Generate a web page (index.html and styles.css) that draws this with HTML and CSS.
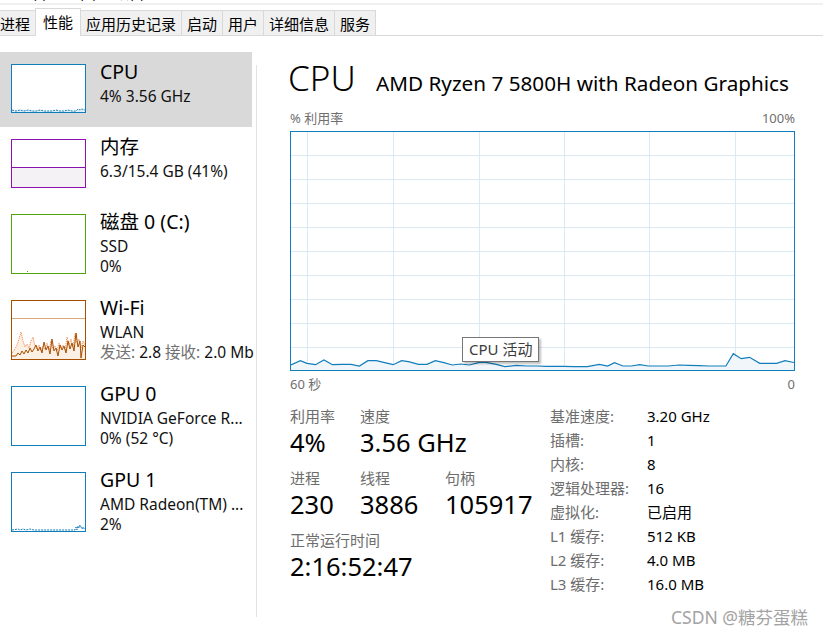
FILE: index.html
```html
<!DOCTYPE html>
<html lang="zh-CN">
<head>
<meta charset="utf-8">
<title>任务管理器 - 性能</title>
<link rel="stylesheet" href="styles.css">
</head>
<body>
<div class="menu-strip"><span class="menu-text">文件(F)&nbsp;&nbsp;&nbsp;选项(O)&nbsp;&nbsp;&nbsp;查看(V)</span></div>
<div class="band"></div>
<nav class="tabs">
  <div class="tab">进程</div>
  <div class="tab active">性能</div>
  <div class="tab">应用历史记录</div>
  <div class="tab">启动</div>
  <div class="tab">用户</div>
  <div class="tab">详细信息</div>
  <div class="tab">服务</div>
</nav>
<div class="main">
  <aside class="side">
    <div class="item sel">
      <div class="thumb c-blue">
        <svg viewBox="0 0 73 47" preserveAspectRatio="none">
          <polygon fill="#e3eef7" points="0,47 0,45 4,46 8,45 12,46 16,45 20,46 24,46 28,45 32,46 36,46 40,46 44,45 48,46 52,46 56,45 60,46 64,46 66,44 68,45 70,44 73,45 73,47"/>
          <polyline fill="none" stroke="#117dbb" stroke-width="1" stroke-dasharray="2 1" points="0,45 4,46 8,45 12,46 16,45 20,46 24,46 28,45 32,46 36,46 40,46 44,45 48,46 52,46 56,45 60,46 64,46 66,44 68,45 70,44 73,45"/>
        </svg>
      </div>
      <div class="info">
        <div class="name">CPU</div>
        <div class="sub">4% 3.56 GHz</div>
      </div>
    </div>
    <div class="item">
      <div class="thumb c-purple">
        <svg viewBox="0 0 73 47" preserveAspectRatio="none">
          <rect x="0" y="27.5" width="73" height="20" fill="#f4f2f4"/>
          <line x1="0" y1="27.5" x2="73" y2="27.5" stroke="#8b12ae" stroke-width="1"/>
        </svg>
      </div>
      <div class="info">
        <div class="name">内存</div>
        <div class="sub">6.3/15.4 GB (41%)</div>
      </div>
    </div>
    <div class="item tall">
      <div class="thumb c-green">
        <svg viewBox="0 0 73 58" preserveAspectRatio="none">
          <rect x="15" y="56" width="1" height="1" fill="#4da60c"/>
        </svg>
      </div>
      <div class="info">
        <div class="name">磁盘 0 (C:)</div>
        <div class="sub">SSD</div>
        <div class="sub">0%</div>
      </div>
    </div>
    <div class="item tall">
      <div class="thumb c-orange">
        <svg viewBox="0 0 73 58" preserveAspectRatio="none">
          <line x1="0" y1="17.5" x2="73" y2="17.5" stroke="#dba879" stroke-width="1"/>
          <polygon fill="#fcefe3" points="0,58 0,52 3,48 5,44 7,38 9,31 11,40 13,46 15,43 17,47 19,40 21,36 23,45 25,48 27,44 29,50 31,45 33,48 35,42 37,49 39,40 41,48 43,45 45,50 47,42 49,47 51,44 53,49 55,36 57,44 59,38 61,46 63,33 65,42 67,38 69,47 71,40 73,44 73,58"/>
          <polyline fill="none" stroke="#f0854a" stroke-width="1" stroke-dasharray="1 1" points="0,52 3,48 5,44 7,38 9,31 11,40 13,46 15,43 17,47 19,40 21,36 23,45 25,48 27,44 29,50 31,45 33,48 35,42 37,49 39,40 41,48 43,45 45,50 47,42 49,47 51,44 53,49 55,36 57,44 59,38 61,46 63,33 65,42 67,38 69,47 71,40 73,44"/>
          <polyline fill="none" stroke="#a74f01" stroke-width="1" points="0,55 4,55 6,52 8,54 10,50 12,53 14,49 16,52 18,47 20,51 22,48 24,44 26,50 28,46 30,52 32,41 34,49 36,45 38,53 40,38 42,50 44,47 46,55 48,44 50,49 52,45 54,52 56,40 58,48 60,42 62,50 64,32 66,46 68,40 69,57 71,44 73,46"/>
        </svg>
      </div>
      <div class="info">
        <div class="name">Wi-Fi</div>
        <div class="sub">WLAN</div>
        <div class="sub"><span class="dim">发送:</span> 2.8 <span class="dim">接收:</span> 2.0 Mb</div>
      </div>
    </div>
    <div class="item tall">
      <div class="thumb c-blue"></div>
      <div class="info">
        <div class="name">GPU 0</div>
        <div class="sub">NVIDIA GeForce R...</div>
        <div class="sub">0% (52 °C)</div>
      </div>
    </div>
    <div class="item tall">
      <div class="thumb c-blue">
        <svg viewBox="0 0 73 58" preserveAspectRatio="none">
          <polyline fill="none" stroke="#117dbb" stroke-width="1" stroke-dasharray="2 1" points="0,57 6,56 8,57 11,56 14,57 18,56 22,57 30,57 40,57 50,57 60,57 63,57 64,54 65,57 66,53 67,55 68,52 70,56 71,54 73,57"/>
        </svg>
      </div>
      <div class="info">
        <div class="name">GPU 1</div>
        <div class="sub">AMD Radeon(TM) ...</div>
        <div class="sub">2%</div>
      </div>
    </div>
  </aside>
  <div class="sep"></div>
  <section class="detail">
    <div class="head">
      <h1 class="title">CPU</h1>
      <div class="model">AMD Ryzen 7 5800H with Radeon Graphics</div>
    </div>
    <div class="scale"><span>% 利用率</span><span>100%</span></div>
    <div class="graph">
      <svg class="plot" viewBox="0 0 503 238" width="503" height="238">
        <g stroke="#d9eaf4" stroke-width="1">
          <line x1="0" y1="23.5" x2="503" y2="23.5"/>
          <line x1="0" y1="47.5" x2="503" y2="47.5"/>
          <line x1="0" y1="71.5" x2="503" y2="71.5"/>
          <line x1="0" y1="95.5" x2="503" y2="95.5"/>
          <line x1="0" y1="119.5" x2="503" y2="119.5"/>
          <line x1="0" y1="143.5" x2="503" y2="143.5"/>
          <line x1="0" y1="167.5" x2="503" y2="167.5"/>
          <line x1="0" y1="191.5" x2="503" y2="191.5"/>
          <line x1="0" y1="215.5" x2="503" y2="215.5"/>
          <line x1="16.5" y1="0" x2="16.5" y2="238"/>
          <line x1="102.5" y1="0" x2="102.5" y2="238"/>
          <line x1="188.5" y1="0" x2="188.5" y2="238"/>
          <line x1="273.5" y1="0" x2="273.5" y2="238"/>
          <line x1="358.5" y1="0" x2="358.5" y2="238"/>
          <line x1="444.5" y1="0" x2="444.5" y2="238"/>
        </g>
        <polygon fill="#f1f6fa" points="0,238 0,233 9.3,228.7 16,231.3 24.5,232.7 32.9,228 41.4,232.7 51.5,232.3 60,232.3 68.4,234 76.9,228.7 85.3,228.7 93.7,230.7 102.2,232.7 110.6,228.7 117.4,229.7 127.5,232.3 136,232.3 144.4,228.7 152.9,230.7 161.3,233 169.7,232 178.2,233 188.4,230.3 195,230.3 205.2,232.3 213.7,234.7 225.5,233.3 235.6,234 245.7,234 255.9,234.3 272.8,234.3 282.9,234.7 296.4,234.7 308.3,232.3 316.7,234 323.5,230.7 331.9,234 340.4,234 348.8,232.7 357.2,234 367.4,234 377.5,234 387.6,233 397.8,233.3 407.9,233.7 418,234 434.9,234 442.3,221.7 450.2,226.7 458.6,225.3 468.7,231.3 477.2,231.3 485.6,231.3 494,228.7 503,230.5 503,238"/>
        <polyline fill="none" stroke="#117dbb" stroke-width="1.2" points="0,233 9.3,228.7 16,231.3 24.5,232.7 32.9,228 41.4,232.7 51.5,232.3 60,232.3 68.4,234 76.9,228.7 85.3,228.7 93.7,230.7 102.2,232.7 110.6,228.7 117.4,229.7 127.5,232.3 136,232.3 144.4,228.7 152.9,230.7 161.3,233 169.7,232 178.2,233 188.4,230.3 195,230.3 205.2,232.3 213.7,234.7 225.5,233.3 235.6,234 245.7,234 255.9,234.3 272.8,234.3 282.9,234.7 296.4,234.7 308.3,232.3 316.7,234 323.5,230.7 331.9,234 340.4,234 348.8,232.7 357.2,234 367.4,234 377.5,234 387.6,233 397.8,233.3 407.9,233.7 418,234 434.9,234 442.3,221.7 450.2,226.7 458.6,225.3 468.7,231.3 477.2,231.3 485.6,231.3 494,228.7 503,230.5"/>
      </svg>
      <div class="tooltip">CPU 活动</div>
    </div>
    <div class="scale axis"><span>60 秒</span><span>0</span></div>
    <div class="stats">
      <div class="left-stats">
        <div class="row">
          <div><div class="lbl">利用率</div><div class="val">4%</div></div>
          <div><div class="lbl">速度</div><div class="val">3.56 GHz</div></div>
        </div>
        <div class="row">
          <div><div class="lbl">进程</div><div class="val">230</div></div>
          <div><div class="lbl">线程</div><div class="val">3886</div></div>
          <div><div class="lbl">句柄</div><div class="val">105917</div></div>
        </div>
        <div class="row">
          <div class="wide"><div class="lbl">正常运行时间</div><div class="val">2:16:52:47</div></div>
        </div>
      </div>
      <dl class="specs">
        <dt>基准速度:</dt><dd>3.20 GHz</dd>
        <dt>插槽:</dt><dd>1</dd>
        <dt>内核:</dt><dd>8</dd>
        <dt>逻辑处理器:</dt><dd>16</dd>
        <dt>虚拟化:</dt><dd>已启用</dd>
        <dt>L1 缓存:</dt><dd>512 KB</dd>
        <dt>L2 缓存:</dt><dd>4.0 MB</dd>
        <dt>L3 缓存:</dt><dd>16.0 MB</dd>
      </dl>
    </div>
  </section>
</div>
<div class="watermark">CSDN @糖芬蛋糕</div>
</body>
</html>
```

FILE: styles.css
```css
html, body {
  margin: 0;
  padding: 0;
}
body {
  width: 823px;
  height: 635px;
  overflow: hidden;
  position: relative;
  background: #fff;
  color: #000;
  font-family: "Noto Sans", "Noto Sans CJK SC", sans-serif;
}

.menu-strip {
  height: 3px;
  overflow: hidden;
  display: flex;
  align-items: flex-end;
  padding-left: 9px;
}
.menu-text {
  font-size: 12px;
  line-height: 16px;
  white-space: nowrap;
  color: #000;
}
.band {
  height: 2px;
  background: #f0f0f0;
}

.tabs {
  display: flex;
  align-items: flex-end;
  height: 30px;
  border-bottom: 1px solid #d9d9d9;
  margin-left: -6px;
}
.tab {
  border: 1px solid #d9d9d9;
  border-bottom: none;
  background: #f0f0f0;
  padding: 4px 5px 2px;
  line-height: 18px;
  font-size: 15px;
  margin-left: -1px;
  white-space: nowrap;
}
.tab:first-child {
  margin-left: 0;
}
.tab.active {
  background: #fff;
  padding: 4px 7px 5px;
  margin-bottom: -1px;
  position: relative;
  z-index: 1;
}

.main {
  display: flex;
  height: 599px;
}

.side {
  width: 256px;
  flex: none;
  overflow: hidden;
  padding-top: 16px;
  white-space: nowrap;
}
.item {
  display: flex;
  align-items: flex-start;
  width: 252px;
  height: 75px;
  box-sizing: border-box;
  padding: 12px 0 0 11px;
}
.item.tall {
  height: 86px;
}
.item.sel {
  background: #d9d9d9;
}
.thumb {
  width: 75px;
  height: 49px;
  box-sizing: border-box;
  border: 1px solid #117dbb;
  background: #fff;
  flex: none;
}
.tall .thumb {
  height: 60px;
}
.thumb svg {
  display: block;
  width: 73px;
  height: 100%;
}
.c-blue { border-color: #117dbb; }
.c-purple { border-color: #8b12ae; }
.c-green { border-color: #4da60c; }
.c-orange { border-color: #a74f01; }

.info {
  margin-left: 14px;
}
.name {
  font-size: 19.5px;
  line-height: 16px;
  margin-bottom: 6px;
}
.sub {
  font-size: 15.5px;
  line-height: 20px;
  color: #111;
}
.dim {
  color: #707070;
}

.sep {
  width: 1px;
  flex: none;
  background: #e3e3e3;
  margin-top: 29px;
  height: 552px;
}

.detail {
  margin-left: 33px;
  width: 505px;
  padding-top: 18px;
  flex: none;
}
.head {
  display: flex;
  align-items: baseline;
  height: 48px;
}
.title {
  flex: 0 0 88px;
  margin: 0 0 0 -2px;
  font-size: 35px;
  font-weight: 300;
  line-height: 48px;
}
.model {
  font-size: 20.7px;
  white-space: nowrap;
}
.scale {
  display: flex;
  justify-content: space-between;
  font-size: 13px;
  line-height: 16px;
  color: #707070;
  margin-top: 8px;
}
.graph {
  position: relative;
  margin-top: 5px;
  height: 240px;
  border: 1px solid #117dbb;
  box-sizing: border-box;
}
.plot {
  display: block;
}
.tooltip {
  position: absolute;
  left: 171px;
  top: 205px;
  height: 25px;
  box-sizing: border-box;
  border: 1px solid #767676;
  background: #fff;
  box-shadow: 2px 2px 2px rgba(0, 0, 0, 0.25);
  padding: 0 6px;
  font-size: 15px;
  line-height: 23px;
  color: #3c3c3c;
  white-space: nowrap;
}
.axis {
  margin-top: 5px;
}

.stats {
  display: flex;
  margin-top: 12px;
}
.left-stats {
  width: 260px;
  flex: none;
  padding-top: 2px;
}
.row {
  display: grid;
  grid-template-columns: 70px 85px auto;
}
.row + .row {
  margin-top: 10px;
}
.wide {
  grid-column: 1 / 4;
}
.lbl {
  font-size: 15px;
  line-height: 20px;
  color: #6d6d6d;
}
.val {
  font-size: 25.5px;
  line-height: 32px;
  white-space: nowrap;
}

.specs {
  display: grid;
  grid-template-columns: 97px auto;
  margin: 0;
  font-size: 15px;
  line-height: 24px;
}
.specs dt {
  color: #6d6d6d;
}
.specs dd {
  margin: 0;
  color: #000;
}

.watermark {
  position: absolute;
  left: 671px;
  top: 607px;
  font-size: 17.5px;
  line-height: 20px;
  color: #a3a3a3;
  white-space: nowrap;
}
```
